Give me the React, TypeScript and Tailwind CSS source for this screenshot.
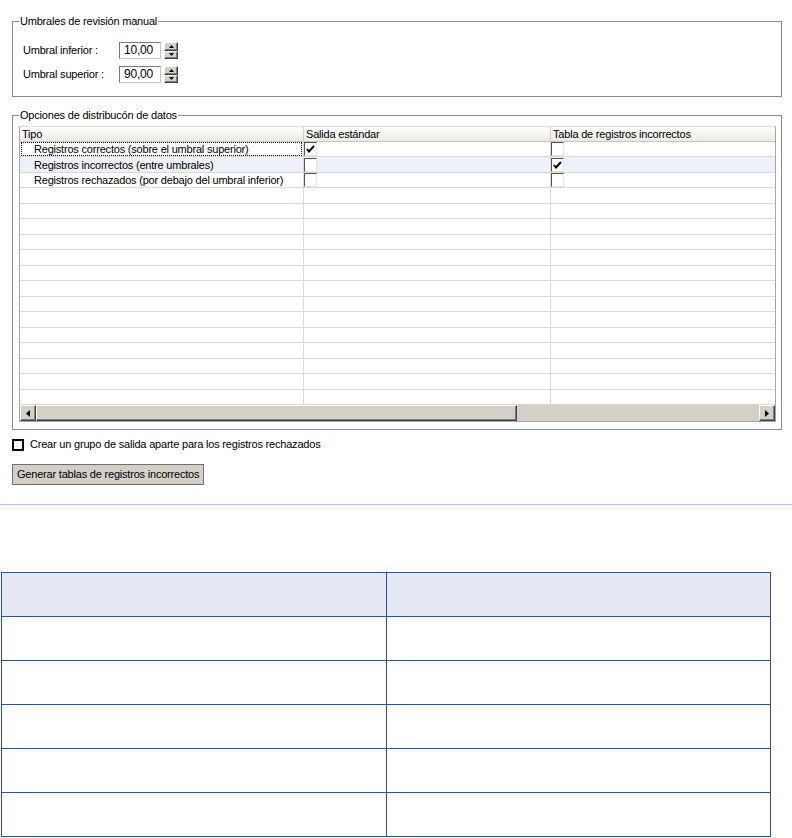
import React from "react";

const raised =
  "bg-[#d4d0c8] border border-t-white border-l-white border-b-[#404040] border-r-[#404040] shadow-[inset_-1px_-1px_0_#808080]";

const Spinner = () => (
  <div className="flex flex-col w-[14px] h-[17px] ml-[3px]">
    <div className={`${raised} flex-1 flex items-center justify-center`}>
      <svg width="5" height="3" viewBox="0 0 5 3">
        <path d="M2.5 0 L5 3 L0 3 Z" fill="#000" />
      </svg>
    </div>
    <div className={`${raised} flex-1 flex items-center justify-center`}>
      <svg width="5" height="3" viewBox="0 0 5 3">
        <path d="M0 0 L5 0 L2.5 3 Z" fill="#000" />
      </svg>
    </div>
  </div>
);

const NumField = ({ label, value }: { label: string; value: string }) => (
  <div className="flex items-center h-[17px]">
    <span className="w-[96px]">{label}</span>
    <div className="w-[42px] h-[17px] border border-[#7a7a7a] border-b-[#c8c8c8] border-r-[#c8c8c8] bg-white flex items-center pl-[4px] text-[12px]">
      {value}
    </div>
    <Spinner />
  </div>
);

const CellCheck = ({ checked }: { checked?: boolean }) => (
  <div className="w-[13px] h-[14px] bg-white border border-t-[#555] border-l-[#555] border-b-[#e4e4e4] border-r-[#e4e4e4] flex items-center justify-center">
    {checked && (
      <svg width="9" height="8" viewBox="0 0 9 8">
        <path d="M1 4 L3 6.5 L8 1" stroke="#000" strokeWidth="2" fill="none" />
      </svg>
    )}
  </div>
);

const rows = [
  { tipo: "Registros correctos (sobre el umbral superior)", std: true, tab: false, focus: true },
  { tipo: "Registros incorrectos (entre umbrales)", std: false, tab: true, alt: true },
  { tipo: "Registros rechazados (por debajo del umbral inferior)", std: false, tab: false },
];

export default function App() {
  return (
    <div className="w-[792px] h-[838px] bg-white overflow-hidden font-['Liberation_Sans',Tahoma,sans-serif] text-[11px] leading-[13px] tracking-[-0.2px] text-black">
      <div className="pt-[15px] pl-[12px]">
        {/* Umbrales */}
        <fieldset className="w-[770px] border border-[#8c8c8c]">
          <legend className="ml-[6px] px-[1px] leading-[13px]">Umbrales de revisión manual</legend>
          <div className="flex flex-col gap-[7px] pl-[10px] pt-[14px] pb-[13px]">
            <NumField label="Umbral inferior :" value="10,00" />
            <NumField label="Umbral superior :" value="90,00" />
          </div>
        </fieldset>

        {/* Opciones */}
        <fieldset className="w-[770px] mt-[12px] border border-[#8c8c8c]">
          <legend className="ml-[6px] px-[1px] leading-[13px]">Opciones de distribucón de datos</legend>
          <div className="pl-[6px] pt-[4px] pb-[7px]">
            <div className="w-[757px] h-[296px] border border-[#a8a59c] border-t-[#e2e0da] flex flex-col bg-white">
              <div className="grid grid-cols-[284px_247px_1fr] h-[15px] bg-gradient-to-b from-white to-[#ebeae5] border-b border-[#c9c6bb]">
                <div className="pl-[2px] border-r border-[#d4d0c8] leading-[14px]">Tipo</div>
                <div className="pl-[2px] border-r border-[#d4d0c8] leading-[14px]">Salida estándar</div>
                <div className="pl-[2px] leading-[14px]">Tabla de registros incorrectos</div>
              </div>
              <div className="flex-1 min-h-0 grid grid-rows-[repeat(17,minmax(0,1fr))] overflow-hidden">
                {Array.from({ length: 17 }).map((_, i) => {
                  const r = rows[i];
                  return (
                    <div
                      key={i}
                      className={`min-h-0 overflow-hidden grid grid-cols-[284px_247px_1fr] border-b border-[#dcd9d2] ${r?.alt ? "bg-[#eef1f7]" : ""}`}
                    >
                      <div className="min-h-0 border-r border-[#dcd9d2] px-[1px] flex">
                        {r && (
                          <div
                            className={`flex-1 pl-[12px] flex items-center leading-[12px] ${r.focus ? "border border-dotted border-black" : "border border-transparent"}`}
                          >
                            {r.tipo}
                          </div>
                        )}
                      </div>
                      <div className="min-h-0 border-r border-[#dcd9d2] flex items-center">
                        {r && <CellCheck checked={r.std} />}
                      </div>
                      <div className="min-h-0 flex items-center">{r && <CellCheck checked={r.tab} />}</div>
                    </div>
                  );
                })}
              </div>
              <div className="h-[16px] shrink-0 flex bg-[#d4d0c8]">
                <div className={`${raised} w-[16px] flex items-center justify-center`}>
                  <svg width="4" height="7" viewBox="0 0 4 7">
                    <path d="M4 0 L0 3.5 L4 7 Z" fill="#000" />
                  </svg>
                </div>
                <div className={`${raised} w-[481px]`} />
                <div className="flex-1" />
                <div className={`${raised} w-[16px] flex items-center justify-center`}>
                  <svg width="4" height="7" viewBox="0 0 4 7">
                    <path d="M0 0 L4 3.5 L0 7 Z" fill="#000" />
                  </svg>
                </div>
              </div>
            </div>
          </div>
        </fieldset>

        <label className="flex items-center gap-[6px] mt-[8px] h-[13px]">
          <span className="w-[12px] h-[12px] border-2 border-black bg-white" />
          <span>Crear un grupo de salida aparte para los registros rechazados</span>
        </label>

        <button className="mt-[13px] w-[192px] h-[21px] pl-[4px] text-left whitespace-nowrap bg-[#d4d0c8] border border-[#6f6f6f] text-[11px] leading-[13px]">
          Generar tablas de registros incorrectos
        </button>
      </div>

      <div className="mt-[19px] h-px bg-[#a9c4ea]" />

      <table className="mt-[67px] ml-[1px] border-collapse">
        <tbody>
          {Array.from({ length: 6 }).map((_, i) => (
            <tr key={i} className={`h-[44px] ${i === 0 ? "bg-[#e4e9f4]" : ""}`}>
              <td className="w-[385px] border border-[#2b51a6]" />
              <td className="w-[384px] border border-[#2b51a6]" />
            </tr>
          ))}
        </tbody>
      </table>
    </div>
  );
}
